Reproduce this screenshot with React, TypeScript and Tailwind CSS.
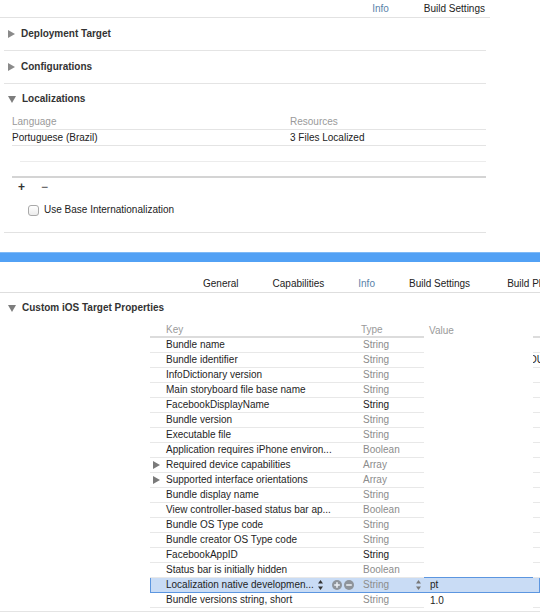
import React from 'react';

type Row = {
  key: string;
  type: string;
  value?: string;
  expandable?: boolean;
  strong?: boolean;
  selected?: boolean;
  edge?: boolean;
};

const rows: Row[] = [
  { key: 'Bundle name', type: 'String' },
  { key: 'Bundle identifier', type: 'String', edge: true },
  { key: 'InfoDictionary version', type: 'String' },
  { key: 'Main storyboard file base name', type: 'String' },
  { key: 'FacebookDisplayName', type: 'String', strong: true },
  { key: 'Bundle version', type: 'String' },
  { key: 'Executable file', type: 'String' },
  { key: 'Application requires iPhone environ...', type: 'Boolean' },
  { key: 'Required device capabilities', type: 'Array', expandable: true },
  { key: 'Supported interface orientations', type: 'Array', expandable: true },
  { key: 'Bundle display name', type: 'String' },
  { key: 'View controller-based status bar ap...', type: 'Boolean' },
  { key: 'Bundle OS Type code', type: 'String' },
  { key: 'Bundle creator OS Type code', type: 'String' },
  { key: 'FacebookAppID', type: 'String', strong: true },
  { key: 'Status bar is initially hidden', type: 'Boolean' },
  { key: 'Localization native developmen...', type: 'String', value: 'pt', selected: true },
  { key: 'Bundle versions string, short', type: 'String', value: '1.0' },
];

function TriRight({ color = '#8a8a8a' }: { color?: string }) {
  return (
    <svg width="7" height="8" viewBox="0 0 7 8" className="shrink-0">
      <polygon points="0,0 7,4 0,8" fill={color} />
    </svg>
  );
}

function TriDown() {
  return (
    <svg width="8" height="7" viewBox="0 0 8 7" className="shrink-0">
      <polygon points="0,0 8,0 4,7" fill="#7d7d7d" />
    </svg>
  );
}

function Stepper({ color = '#333' }: { color?: string }) {
  return (
    <svg width="5" height="10" viewBox="0 0 5 10" className="shrink-0">
      <polygon points="2.5,0 5,3.5 0,3.5" fill={color} />
      <polygon points="0,6.5 5,6.5 2.5,10" fill={color} />
    </svg>
  );
}

function RoundButton({ plus }: { plus?: boolean }) {
  return (
    <svg width="10" height="10" viewBox="0 0 10 10" className="shrink-0">
      <circle cx="5" cy="5" r="5" fill="#8e949b" />
      <rect x="2.2" y="4.2" width="5.6" height="1.6" fill="#e8edf3" />
      {plus && <rect x="4.2" y="2.2" width="1.6" height="5.6" fill="#e8edf3" />}
    </svg>
  );
}

function Section({ title }: { title: string }) {
  return (
    <div className="h-[33px] border-b border-[#e4e4e4] flex items-center gap-[6px] pl-[4px]">
      <TriRight />
      <span className="font-bold text-[10px] text-[#333]">{title}</span>
    </div>
  );
}

function PropRow({ row }: { row: Row }) {
  if (row.selected) {
    return (
      <div className="h-[15px] flex bg-[#c9dcf5] border border-[#5c96e0] -mt-px h-[16px]">
        <div className="w-[207px] pl-[15px] pr-[4px] flex items-center">
          <span className="text-[#1e1e1e] truncate">{row.key}</span>
          <span className="ml-auto flex items-center gap-[2px]">
            <Stepper />
            <span className="w-[5px]" />
            <RoundButton plus />
            <RoundButton />
          </span>
        </div>
        <div className="w-[66px] pl-[5px] pr-[3px] flex items-center">
          <span className="text-[#8c8c8c]">{row.type}</span>
          <span className="ml-auto">
            <Stepper color="#777" />
          </span>
        </div>
        <div className="flex-1 pl-[6px] flex items-center text-[#1e1e1e]">{row.value}</div>
      </div>
    );
  }
  return (
    <div className="h-[15px] flex">
      <div className="w-[208px] border-b border-[#e8e8e8] flex items-center pl-[3px] gap-[6px]">
        {row.expandable ? <TriRight color="#7a7a7a" /> : <span className="w-[7px]" />}
        <span className="text-[#1e1e1e]">{row.key}</span>
      </div>
      <div className="w-[66px] border-b border-[#e8e8e8] flex items-center pl-[5px]">
        <span className={row.strong ? 'text-[#1a1a1a]' : 'text-[#8c8c8c]'}>{row.type}</span>
      </div>
      <div className="w-[109px] flex items-center pl-[6px] text-[#1e1e1e]">{row.value}</div>
      <div className="flex-1 border-b border-[#e8e8e8] overflow-hidden flex items-center">
        {row.edge && <span className="-ml-[4px] text-[#1e1e1e] whitespace-nowrap">OU</span>}
      </div>
    </div>
  );
}

export default function App() {
  return (
    <div className="w-[540px] h-[615px] bg-white overflow-hidden font-['Liberation_Sans',Arial,sans-serif] text-[10px] leading-none text-[#222]">
      {/* Upper (older) editor panel */}
      <div className="w-[490px]">
        <div className="h-[18px] border-b border-[#e2e2e2] flex items-center justify-end gap-[35px] pr-[5px]">
          <span className="text-[#5a7fa9]">Info</span>
          <span>Build Settings</span>
        </div>
        <div className="px-[4px]">
          <Section title="Deployment Target" />
          <Section title="Configurations" />
          <div className="border-b border-[#e2e2e2]">
            <div className="h-[30px] flex items-center gap-[6px] pl-[4px]">
              <TriDown />
              <span className="font-bold text-[10px] text-[#333]">Localizations</span>
            </div>
            <div className="ml-[8px]">
              <div className="h-[16px] flex items-center border-b border-[#e4e4e4] text-[#9a9a9a]">
                <span className="w-[278px]">Language</span>
                <span>Resources</span>
              </div>
              <div className="h-[16px] flex items-center border-b border-[#e4e4e4]">
                <span className="w-[278px]">Portuguese (Brazil)</span>
                <span>3 Files Localized</span>
              </div>
              <div className="h-[16px] pl-[8px]">
                <div className="h-full border-b border-[#ececec]" />
              </div>
              <div className="h-[16px] border-b-2 border-[#d4d4d4]" />
              <div className="h-[18px] flex items-center gap-[16px] pl-[6px] text-[12px] text-[#333]">
                <span className="font-bold">+</span>
                <span>−</span>
              </div>
              <div className="h-[28px] flex items-center gap-[5px] pl-[16px]">
                <span className="w-[11px] h-[11px] rounded-[3px] border border-[#a9a9a9] bg-gradient-to-b from-white to-[#ececec]" />
                <span>Use Base Internationalization</span>
              </div>
              <div className="h-[8px]" />
            </div>
          </div>
        </div>
      </div>

      <div className="h-[19px]" />
      <div className="h-[10px] bg-[#52a1f5] border-t border-[#7fbaf7]" />

      {/* Lower (newer) editor panel */}
      <div className="h-[31px] border-b border-[#dedede] flex items-end pb-[3px] pl-[203px] gap-[34px] whitespace-nowrap overflow-hidden">
        <span>General</span>
        <span>Capabilities</span>
        <span className="text-[#5a7fa9]">Info</span>
        <span>Build Settings</span>
        <span className="ml-[3px]">Build Phases</span>
      </div>
      <div className="h-[30px] flex items-center gap-[6px] pl-[8px]">
        <TriDown />
        <span className="font-bold text-[10px] text-[#333]">Custom iOS Target Properties</span>
      </div>

      <div className="ml-[150px]">
        <div className="h-[15px] flex text-[#9a9a9a]">
          <div className="w-[208px] border-b-2 border-[#dcdcdc] flex items-center pl-[16px]">Key</div>
          <div className="w-[66px] border-b-2 border-[#dcdcdc] flex items-center pl-[3px]">Type</div>
          <div className="w-[109px] flex items-center pl-[5px]">Value</div>
          <div className="flex-1 border-b-2 border-[#dcdcdc]" />
        </div>
        {rows.map((r) => (
          <PropRow key={r.key} row={r} />
        ))}
        <div className="h-[4px] border-b border-[#e4e4e4] -ml-[150px]" />
      </div>
    </div>
  );
}
